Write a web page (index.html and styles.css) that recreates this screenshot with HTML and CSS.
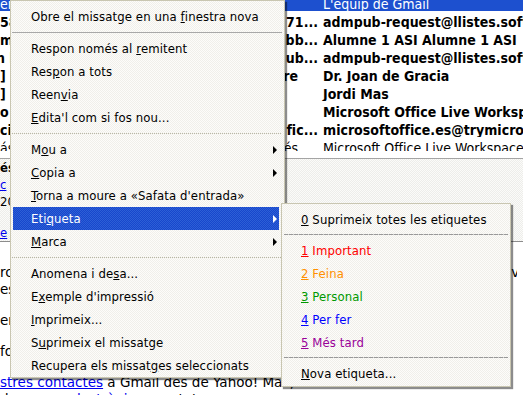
FILE: index.html
```html
<!DOCTYPE html>
<html lang="ca">
<head>
  <meta charset="UTF-8">
  <title>Safata d'entrada</title>
  <link rel="stylesheet" href="styles.css">
</head>
<body>
  <div class="thread-list">
    <div class="rows">
      <div class="row selected"><span class="subj"><span>en</span><span></span></span><span class="from">L'equip de Gmail</span></div>
      <div class="row unread"><span class="subj"><span>58</span><span>71...</span></span><span class="from">admpub-request@llistes.softcatala.org</span></div>
      <div class="row unread"><span class="subj"><span>m</span><span>bb...</span></span><span class="from">Alumne 1 ASI Alumne 1 ASI</span></div>
      <div class="row unread"><span class="subj"><span class="cut">n la</span><span>ub...</span></span><span class="from">admpub-request@llistes.softcatala.org</span></div>
      <div class="row unread"><span class="subj"><span>] I</span><span class="short">re</span></span><span class="from">Dr. Joan de Gracia</span></div>
      <div class="row unread"><span class="subj"><span>] S</span><span></span></span><span class="from">Jordi Mas</span></div>
      <div class="row unread"><span class="subj"><span>o</span><span></span></span><span class="from">Microsoft Office Live Workspace</span></div>
      <div class="row unread"><span class="subj"><span>ció</span><span>fic...</span></span><span class="from">microsoftoffice.es@trymicrosoftoffice.com</span></div>
      <div class="row"><span class="subj"><span>ás</span><span class="short">és</span></span><span class="from">Microsoft Office Live Workspace</span></div>
    </div>
  </div>
  <div class="splitter"></div>

  <div class="msg-header">
    <div class="hline"><b>és</b></div>
    <div class="hline"><a href="#">c</a></div>
    <div class="hline">20</div>
    <div class="hline gap"><a href="#">e</a></div>
  </div>

  <div class="msg-body">
    <p>rcau de correu de Google. Ara podeu accedir al vostre correu des de qualsevol lloc.<br>es.</p>
    <p>er començar, aquí teniu</p>
    <p>fo Gmail</p>
    <p><a href="#">stres contactes</a> a Gmail des de Yahoo! Mail, Hotmail o Outlook.<br>de <a href="#">correu electrònic</a> per a tots</p>
  </div>

  <div class="menu context">
    <div class="item"><span>Obre el missatge en una <u>f</u>inestra nova</span></div>
    <div class="sep"></div>
    <div class="item"><span>Respon només al <u>r</u>emitent</span></div>
    <div class="item"><span>Res<u>p</u>on a tots</span></div>
    <div class="item"><span>Reen<u>v</u>ia</span></div>
    <div class="item"><span><u>E</u>dita'l com si fos nou...</span></div>
    <div class="sep dotted"></div>
    <div class="item"><span>M<u>o</u>u a</span><span class="arrow"></span></div>
    <div class="item"><span><u>C</u>opia a</span><span class="arrow"></span></div>
    <div class="item"><span><u>T</u>orna a moure a «Safata d'entrada»</span></div>
    <div class="item active"><span>Eti<u>q</u>ueta</span><span class="arrow"></span></div>
    <div class="item"><span><u>M</u>arca</span><span class="arrow"></span></div>
    <div class="sep dotted"></div>
    <div class="item"><span>Anomena i de<u>s</u>a...</span></div>
    <div class="item"><span>E<u>x</u>emple d'impressió</span></div>
    <div class="item"><span><u>I</u>mprimeix...</span></div>
    <div class="item"><span>S<u>u</u>primeix el missatge</span></div>
    <div class="item"><span>Recupera els missat<u>g</u>es seleccionats</span></div>
  </div>

  <div class="menu submenu">
    <div class="item"><span><u>0</u> Suprimeix totes les etiquetes</span></div>
    <div class="sep"></div>
    <div class="item tag-important"><span><u>1</u> Important</span></div>
    <div class="item tag-work"><span><u>2</u> Feina</span></div>
    <div class="item tag-personal"><span><u>3</u> Personal</span></div>
    <div class="item tag-todo"><span><u>4</u> Per fer</span></div>
    <div class="item tag-later"><span><u>5</u> Més tard</span></div>
    <div class="sep"></div>
    <div class="item"><span><u>N</u>ova etiqueta...</span></div>
  </div>
</body>
</html>
```

FILE: styles.css
```css
* {
  box-sizing: border-box;
}
body {
  margin: 0;
  height: 395px;
  overflow: hidden;
  position: relative;
  background-color: #fff;
  font-family: "DejaVu Sans Condensed", "DejaVu Sans", sans-serif;
  font-size: 13px;
  color: #000;
}
a {
  color: #0000ee;
}

/* message list */
.thread-list {
  height: 151px;
  overflow: hidden;
}
.rows {
  margin-top: -7px;
}
.row {
  display: flex;
  height: 18px;
  line-height: 22px;
  font-size: 14px;
  white-space: nowrap;
  overflow: hidden;
}
.row.unread {
  font-weight: bold;
}
.row.selected {
  background-color: #1d50cf;
  color: #fff;
}
.subj {
  flex: none;
  width: 323px;
  display: flex;
  justify-content: space-between;
  padding-right: 5px;
  overflow: hidden;
}
.subj .cut {
  margin-left: -4px;
}
.subj .short {
  margin-right: 20px;
}
.from {
  flex: none;
}
.splitter {
  height: 7px;
}

/* message header */
.msg-header {
  height: 84px;
  border-top: 1px solid #a4a4a4;
  border-bottom: 1px solid #8c8c8c;
  background-color: #f6f6f3;
  background-image: repeating-conic-gradient(#fbfbf9 0 25%, #ededea 0 50%);
  background-size: 2px 2px;
  white-space: nowrap;
}
.hline {
  line-height: 17px;
}
.hline.gap {
  margin-top: 14px;
}

/* message body */
.msg-body {
  padding-top: 22px;
  font-family: "DejaVu Sans", sans-serif;
  font-size: 13.5px;
  line-height: 17px;
  white-space: nowrap;
}
.msg-body p {
  width: 517px;
  overflow: hidden;
  margin: 0 0 14px;
}

/* popup menus */
.menu {
  position: absolute;
  border: 1px solid #c9c6b1;
  background-color: #f8f7f3;
  background-image: repeating-conic-gradient(#fdfcfa 0 25%, #f0efea 0 50%);
  background-size: 2px 2px;
  box-shadow: 2px 2px 1px rgba(0, 0, 0, 0.45);
  font-size: 13px;
  letter-spacing: 0.1px;
  white-space: nowrap;
}
.context {
  left: 10px;
  top: 0;
  width: 275px;
  padding: 4px 5px 0 2px;
}
.submenu {
  left: 281px;
  top: 203px;
  width: 230px;
  padding: 4px 2px 1px 2px;
}
.item {
  display: flex;
  align-items: center;
  height: 23px;
  padding: 0 2px 0 18px;
}
.submenu .item {
  padding-left: 17px;
}
.item.active {
  color: #fff;
  background-color: #1c4ecf;
  background-image: repeating-conic-gradient(#1747cc 0 25%, #2e5fd6 0 50%);
  background-size: 2px 2px;
}
.arrow {
  margin-left: auto;
  width: 0;
  height: 0;
  border-left: 4px solid #000;
  border-top: 4px solid transparent;
  border-bottom: 4px solid transparent;
}
.active .arrow {
  border-left-color: #fff;
}
.sep {
  height: 1px;
  margin: 4px -3px 4px -1px;
  background-color: #a8a8a8;
}
.sep.dotted {
  background-color: transparent;
  background-image: repeating-linear-gradient(90deg, #b9b7a6 0 1px, transparent 1px 2px);
}
.submenu .sep {
  margin: 3px 0 4px;
  background-color: transparent;
  background-image: repeating-linear-gradient(90deg, #999 0 4px, #cfcfcf 4px 5px);
}
.tag-important { color: #ff0000; }
.tag-work { color: #ff9000; }
.tag-personal { color: #009900; }
.tag-todo { color: #0000ff; }
.tag-later { color: #990099; }
```
